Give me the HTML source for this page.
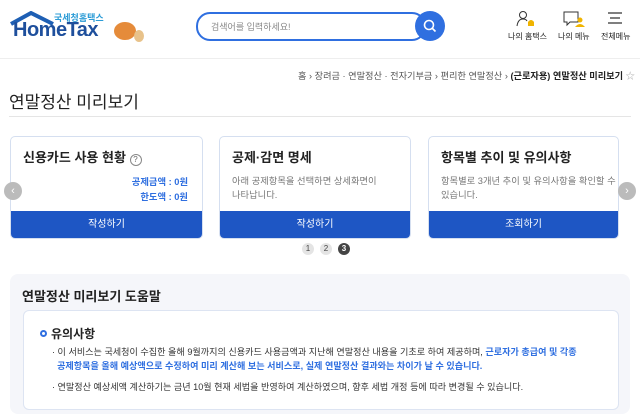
<!DOCTYPE html>
<html><head><meta charset="utf-8"><style>
*{margin:0;padding:0;box-sizing:border-box}
body{width:640px;height:402px;overflow:hidden;background:#fff;font-family:"Liberation Sans","Noto Sans CJK KR",sans-serif;color:#222;position:relative}
.a{position:absolute}
.card{position:absolute;top:136px;height:103px;border:1px solid #d5dff0;border-radius:5px;background:#fff;overflow:hidden}
.card h3{position:absolute;left:12px;top:10px;font-size:13px;font-weight:bold;color:#222}
.card .btn{position:absolute;left:0;right:0;bottom:0;height:27px;background:#1e56c4;color:#fff;font-size:10px;text-align:center;line-height:27px}
.card p{position:absolute;left:12px;top:37px;font-size:9.3px;color:#777;line-height:14px}
.dot{position:absolute;top:243px;width:12px;height:12px;border-radius:50%;background:#e4e4e4;font-size:8px;text-align:center;line-height:12px;color:#444}
</style></head><body>
<svg class="a" style="left:9px;top:11px" width="52" height="20"><path d="M2 13 L22 2 L44 13" fill="none" stroke="#1e5fb4" stroke-width="4"/></svg>
<div class="a" style="left:54px;top:11px;font-size:9px;color:#2a9bd6;font-weight:bold">국세청홈택스</div>
<div class="a" style="left:13px;top:19px;font-size:20px;font-weight:bold;color:#1e4f9c;letter-spacing:-0.5px">HomeTax</div>
<div class="a" style="left:114px;top:22px;width:22px;height:18px;border-radius:50%;background:#e58b3a"></div>
<div class="a" style="left:134px;top:30px;width:10px;height:12px;border-radius:50%;background:#e8c28a"></div>
<div class="a" style="left:196px;top:12px;width:230px;height:29px;border:2px solid #2f6fe0;border-radius:14px"></div>
<div class="a" style="left:211px;top:20px;font-size:9px;color:#888">검색어를 입력하세요!</div>
<div class="a" style="left:415px;top:11px;width:30px;height:30px;border-radius:50%;background:#2f6fe0"></div>
<svg class="a" style="left:422px;top:18px" width="16" height="16"><circle cx="7" cy="7" r="4.5" fill="none" stroke="#fff" stroke-width="1.6"/><path d="M10.5 10.5 L13.5 13.5" stroke="#fff" stroke-width="1.6"/></svg>
<svg class="a" style="left:516px;top:10px" width="22" height="18"><circle cx="7" cy="5" r="3.5" fill="none" stroke="#333"/><path d="M1 16 Q2 9 7 9 Q10 9 11 11" fill="none" stroke="#333"/><path d="M12 16 L12 12 Q15 8 18 12 L18 16 Z" fill="#f0b400"/></svg>
<div class="a" style="left:508px;top:31px;font-size:8px">나의 홈택스</div>
<svg class="a" style="left:562px;top:10px" width="24" height="18"><path d="M2 2 H16 V12 H8 L5 15 V12 H2 Z" fill="none" stroke="#333"/><circle cx="18" cy="10" r="2.5" fill="#f0b400"/><path d="M13 17 Q18 11 23 17 Z" fill="#f0b400"/></svg>
<div class="a" style="left:558px;top:31px;font-size:8px">나의 메뉴</div>
<svg class="a" style="left:607px;top:11px" width="16" height="14"><path d="M1 2H15M3 7H13M1 12H15" stroke="#333" stroke-width="1.2"/></svg>
<div class="a" style="left:601px;top:31px;font-size:8px">전체메뉴</div>
<div class="a" style="left:0;top:58px;width:640px;height:1px;background:#eee"></div>
<div class="a" style="left:298px;top:68px;font-size:9.2px;color:#555;white-space:nowrap">홈 › 장려금 · 연말정산 · 전자기부금 › 편리한 연말정산 › <b style="color:#222">(근로자용) 연말정산 미리보기</b> <span style="color:#aaa">☆</span></div>
<div class="a" style="left:9px;top:88px;font-size:17px;color:#222">연말정산 미리보기</div>
<div class="a" style="left:9px;top:116px;width:622px;height:1px;background:#e5e5e5"></div>
<div class="card" style="left:10px;width:193px"><h3>신용카드 사용 현황 <span style="display:inline-block;width:12px;height:12px;border:1px solid #888;border-radius:50%;font-size:8px;font-weight:normal;text-align:center;line-height:10px;color:#666">?</span></h3>
<div class="a" style="right:14px;top:38px;font-size:9.3px;color:#2f6fe0;font-weight:bold;text-align:right;line-height:15px">공제금액 : 0원<br>한도액 : 0원</div><div class="btn">작성하기</div></div>
<div class="card" style="left:219px;width:192px"><h3>공제·감면 명세</h3><p>아래 공제항목을 선택하면 상세화면이<br>나타납니다.</p><div class="btn">작성하기</div></div>
<div class="card" style="left:428px;width:191px"><h3>항목별 추이 및 유의사항</h3><p>항목별로 3개년 추이 및 유의사항을 확인할 수<br>있습니다.</p><div class="btn">조회하기</div></div>
<div class="a" style="left:4px;top:182px;width:18px;height:18px;border-radius:50%;background:#bbb;color:#fff;font-size:11px;text-align:center;line-height:18px">‹</div>
<div class="a" style="left:618px;top:182px;width:18px;height:18px;border-radius:50%;background:#bbb;color:#fff;font-size:11px;text-align:center;line-height:18px">›</div>
<div class="dot" style="left:302px">1</div><div class="dot" style="left:320px">2</div><div class="dot" style="left:338px;background:#444;color:#fff;font-weight:bold">3</div>
<div class="a" style="left:10px;top:274px;width:620px;height:140px;background:#f5f6fa;border-radius:8px"></div>
<div class="a" style="left:22px;top:286px;font-size:13px;font-weight:bold;color:#222">연말정산 미리보기 도움말</div>
<div class="a" style="left:23px;top:310px;width:596px;height:100px;background:#fff;border:1px solid #dde4f2;border-radius:6px"></div>
<div class="a" style="left:40px;top:330px;width:7px;height:7px;border:2px solid #2f6fe0;border-radius:50%"></div>
<div class="a" style="left:51px;top:325px;font-size:12px;font-weight:bold;color:#222">유의사항</div>
<div class="a" style="left:52px;top:345px;font-size:9.1px;color:#333;line-height:14px;white-space:nowrap">· 이 서비스는 국세청이 수집한 올해 9월까지의 신용카드 사용금액과 지난해 연말정산 내용을 기초로 하여 제공하며, <b style="color:#2f6fe0">근로자가 총급여 및 각종</b><br>&nbsp;&nbsp;<b style="color:#2f6fe0">공제항목을 올해 예상액으로 수정하여 미리 계산해 보는 서비스로, 실제 연말정산 결과와는 차이가 날 수 있습니다.</b></div>
<div class="a" style="left:52px;top:379px;font-size:9.1px;color:#333;white-space:nowrap">· 연말정산 예상세액 계산하기는 금년 10월 현재 세법을 반영하여 계산하였으며, 향후 세법 개정 등에 따라 변경될 수 있습니다.</div>
</body></html>
